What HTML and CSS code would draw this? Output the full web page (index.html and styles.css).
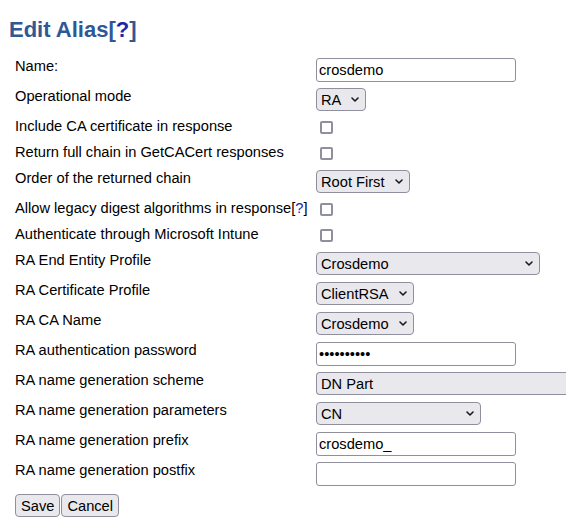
FILE: index.html
```html
<!DOCTYPE html>
<html lang="en">
<head>
<meta charset="utf-8">
<title>Edit Alias</title>
<link rel="stylesheet" href="styles.css">
</head>
<body>
  <h1 class="title">Edit Alias[<a class="help" href="#">?</a>]</h1>

  <form class="alias-form">
    <div class="row">
      <span class="label">Name:</span>
      <span class="control"><input class="text" type="text" value="crosdemo"></span>
    </div>
    <div class="row">
      <span class="label">Operational mode</span>
      <span class="control">
        <span class="select-wrap">
          <select class="select w-ra"><option>RA</option></select>
          <svg class="chev" viewBox="0 0 8 5" width="8" height="5"><polyline points="1,1 4,4 7,1"/></svg>
        </span>
      </span>
    </div>
    <div class="row row-check">
      <span class="label">Include CA certificate in response</span>
      <span class="control"><input class="check" type="checkbox"></span>
    </div>
    <div class="row row-check">
      <span class="label">Return full chain in GetCACert responses</span>
      <span class="control"><input class="check" type="checkbox"></span>
    </div>
    <div class="row">
      <span class="label">Order of the returned chain</span>
      <span class="control">
        <span class="select-wrap">
          <select class="select w-order"><option>Root First</option></select>
          <svg class="chev" viewBox="0 0 8 5" width="8" height="5"><polyline points="1,1 4,4 7,1"/></svg>
        </span>
      </span>
    </div>
    <div class="row row-check">
      <span class="label">Allow legacy digest algorithms in response[<a class="help" href="#">?</a>]</span>
      <span class="control"><input class="check" type="checkbox"></span>
    </div>
    <div class="row row-check">
      <span class="label">Authenticate through Microsoft Intune</span>
      <span class="control"><input class="check" type="checkbox"></span>
    </div>
    <div class="row">
      <span class="label">RA End Entity Profile</span>
      <span class="control">
        <span class="select-wrap">
          <select class="select w-ee"><option>Crosdemo</option></select>
          <svg class="chev" viewBox="0 0 8 5" width="8" height="5"><polyline points="1,1 4,4 7,1"/></svg>
        </span>
      </span>
    </div>
    <div class="row">
      <span class="label">RA Certificate Profile</span>
      <span class="control">
        <span class="select-wrap">
          <select class="select w-cp"><option>ClientRSA</option></select>
          <svg class="chev" viewBox="0 0 8 5" width="8" height="5"><polyline points="1,1 4,4 7,1"/></svg>
        </span>
      </span>
    </div>
    <div class="row">
      <span class="label">RA CA Name</span>
      <span class="control">
        <span class="select-wrap">
          <select class="select w-ca"><option>Crosdemo</option></select>
          <svg class="chev" viewBox="0 0 8 5" width="8" height="5"><polyline points="1,1 4,4 7,1"/></svg>
        </span>
      </span>
    </div>
    <div class="row">
      <span class="label">RA authentication password</span>
      <span class="control"><input class="text" type="password" value="1234567890"></span>
    </div>
    <div class="row">
      <span class="label">RA name generation scheme</span>
      <span class="control">
        <select class="select select-wide"><option>DN Part</option></select>
      </span>
    </div>
    <div class="row">
      <span class="label">RA name generation parameters</span>
      <span class="control">
        <span class="select-wrap">
          <select class="select w-cn"><option>CN</option></select>
          <svg class="chev" viewBox="0 0 8 5" width="8" height="5"><polyline points="1,1 4,4 7,1"/></svg>
        </span>
      </span>
    </div>
    <div class="row">
      <span class="label">RA name generation prefix</span>
      <span class="control"><input class="text" type="text" value="crosdemo_"></span>
    </div>
    <div class="row">
      <span class="label">RA name generation postfix</span>
      <span class="control"><input class="text" type="text" value=""></span>
    </div>

    <div class="actions">
      <button class="btn" type="button">Save</button>
      <button class="btn" type="button">Cancel</button>
    </div>
  </form>
</body>
</html>
```

FILE: styles.css
```css
body {
  margin: 8px;
  font-family: "Liberation Sans", Arial, sans-serif;
  font-size: 14.667px;
  color: #000;
  background: #fff;
}

.title {
  margin: 9px 0 12px 1px;
  font-size: 22px;
  font-weight: bold;
  line-height: normal;
  color: #2f5896;
}

.help {
  color: #1f26a6;
  text-decoration: none;
}

.alias-form {
  padding-left: 7px;
}

.row {
  display: flex;
  align-items: flex-start;
  box-sizing: border-box;
  min-height: 30px;
  padding: 3px 0;
}

.row-check {
  min-height: 26px;
}

.label {
  flex: 0 0 301px;
  line-height: 17px;
  white-space: nowrap;
}

.control {
  display: flex;
  flex: 0 0 auto;
  align-items: flex-start;
}

.text {
  box-sizing: border-box;
  width: 200px;
  height: 24px;
  margin: 0;
  padding: 0 2px;
  border: 1px solid #8f8f9d;
  border-radius: 3px;
  background: #fff;
  font: inherit;
  color: #000;
}

.select-wrap {
  position: relative;
  display: inline-block;
  flex: 0 0 auto;
}

.select {
  -webkit-appearance: none;
  appearance: none;
  box-sizing: border-box;
  display: block;
  height: 23px;
  margin: 0;
  padding: 0 20px 0 4px;
  border: 1px solid #8f8f9d;
  border-radius: 4px;
  background: #e9e9ed;
  font: inherit;
  color: #000;
}

.select-wide {
  width: 258px;
  border-right: 0;
  border-radius: 4px 0 0 4px;
}

.chev {
  position: absolute;
  right: 7px;
  top: 50%;
  margin-top: -2.5px;
  fill: none;
  stroke: #1c1b22;
  stroke-width: 1.6;
  stroke-linecap: round;
  stroke-linejoin: round;
  pointer-events: none;
}

.w-ra { width: 50px; }
.w-order { width: 94px; }
.w-ee { width: 224px; }
.w-cp { width: 98px; }
.w-ca { width: 98px; }
.w-cn { width: 165px; }

.check {
  -webkit-appearance: none;
  appearance: none;
  box-sizing: border-box;
  display: block;
  width: 13px;
  height: 13px;
  margin: 3px 3px 4px 4px;
  border: 2px solid #8f8f9d;
  border-radius: 2px;
  background: #fff;
}

.actions {
  display: flex;
  gap: 1px;
  padding-top: 5px;
}

.btn {
  box-sizing: border-box;
  height: 23px;
  margin: 0;
  padding: 0 5px;
  border: 1px solid #8f8f9d;
  border-radius: 4px;
  background: #e9e9ed;
  font: inherit;
  color: #000;
}
```
